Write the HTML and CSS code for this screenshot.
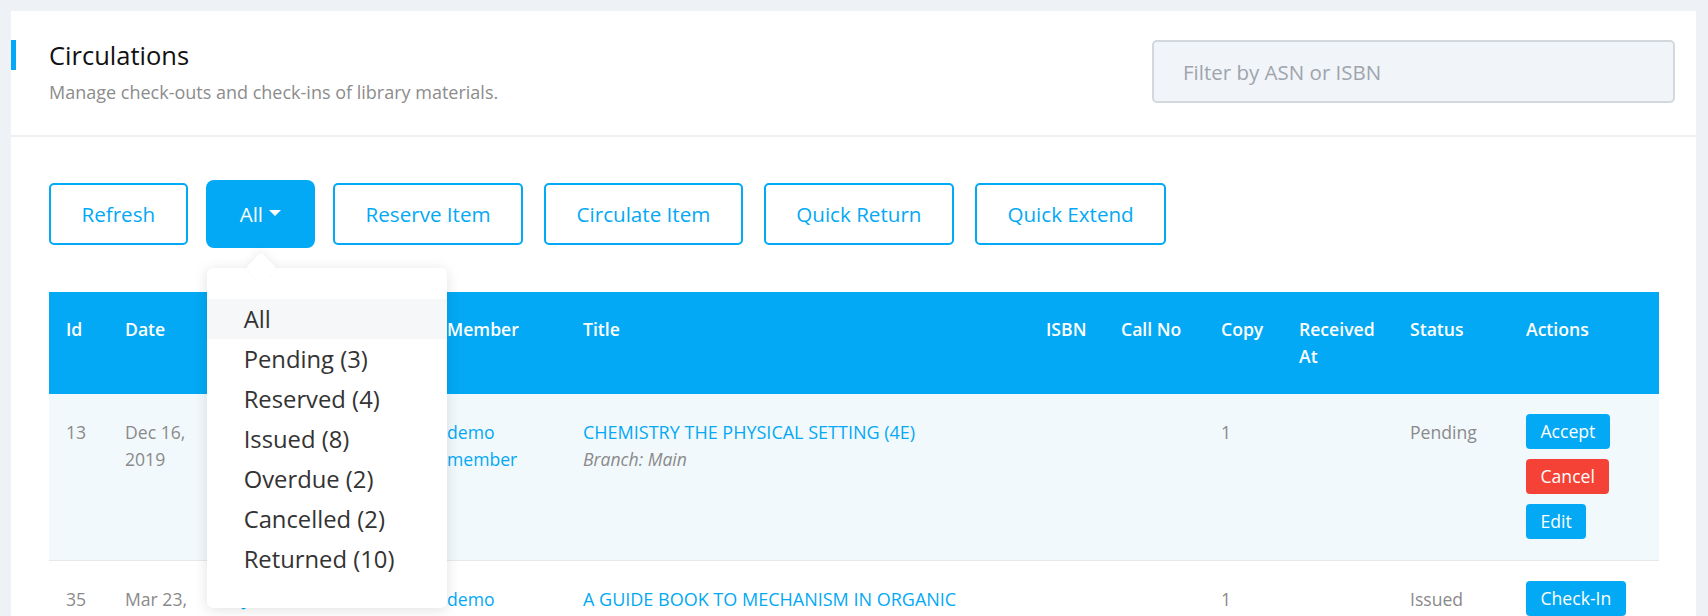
FILE: index.html
```html
<!DOCTYPE html>
<html lang="en">
<head>
<meta charset="utf-8">
<title>Circulations</title>
<link rel="stylesheet" href="styles.css">
</head>
<body>
<div class="card">
  <header class="card-header">
    <div class="heading">
      <h1 class="title">Circulations</h1>
      <p class="subtitle">Manage check-outs and check-ins of library materials.</p>
    </div>
    <input class="search" type="text" placeholder="Filter by ASN or ISBN">
  </header>
  <div class="card-body">
    <div class="toolbar">
      <button class="btn btn-outline">Refresh</button>
      <div class="dropdown">
        <button class="btn btn-filled">All<span class="caret"></span></button>
        <ul class="menu">
          <li class="menu-item active">All</li>
          <li class="menu-item">Pending (3)</li>
          <li class="menu-item">Reserved (4)</li>
          <li class="menu-item">Issued (8)</li>
          <li class="menu-item">Overdue (2)</li>
          <li class="menu-item">Cancelled (2)</li>
          <li class="menu-item">Returned (10)</li>
        </ul>
      </div>
      <button class="btn btn-outline">Reserve Item</button>
      <button class="btn btn-outline">Circulate Item</button>
      <button class="btn btn-outline">Quick Return</button>
      <button class="btn btn-outline">Quick Extend</button>
    </div>
    <table class="grid">
      <colgroup>
        <col class="c-id"><col class="c-date"><col class="c-lib"><col class="c-member"><col class="c-title">
        <col class="c-isbn"><col class="c-call"><col class="c-copy"><col class="c-recv"><col class="c-status"><col class="c-actions">
      </colgroup>
      <thead>
        <tr>
          <th>Id</th><th>Date</th><th>Librarian</th><th>Member</th><th>Title</th>
          <th>ISBN</th><th>Call No</th><th>Copy</th><th>Received At</th><th>Status</th><th>Actions</th>
        </tr>
      </thead>
      <tbody>
        <tr class="row-pending">
          <td>13</td>
          <td>Dec 16, 2019</td>
          <td><a class="link">Jane Doe</a></td>
          <td><a class="link">demo member</a></td>
          <td><a class="link title-link">CHEMISTRY THE PHYSICAL SETTING (4E)</a><div class="branch">Branch: Main</div></td>
          <td></td>
          <td></td>
          <td>1</td>
          <td></td>
          <td>Pending</td>
          <td class="actions">
            <button class="act act-blue">Accept</button>
            <button class="act act-red">Cancel</button>
            <button class="act act-blue">Edit</button>
          </td>
        </tr>
        <tr>
          <td>35</td>
          <td>Mar 23, 2020</td>
          <td><a class="link">Jane Doe</a></td>
          <td><a class="link">demo member</a></td>
          <td><a class="link title-link">A GUIDE BOOK TO MECHANISM IN ORGANIC CHEMISTRY</a><div class="branch">Branch: Main</div></td>
          <td></td>
          <td></td>
          <td>1</td>
          <td></td>
          <td>Issued</td>
          <td class="actions">
            <button class="act act-blue">Check-In</button>
          </td>
        </tr>
      </tbody>
    </table>
  </div>
</div>
</body>
</html>
```
FILE: styles.css
```css
* { box-sizing: border-box; }

html, body {
  margin: 0;
  height: 100%;
}

body {
  background: #eef1f5;
  font-family: "Open Sans", "Liberation Sans", sans-serif;
  color: #8a8a8a;
  padding: 11px 12px 0 11px;
  overflow: hidden;
}

.card {
  background: #ffffff;
  min-height: 100%;
}

.card-header {
  display: flex;
  justify-content: space-between;
  align-items: flex-start;
  padding: 29px 21px 0 0;
  height: 126px;
  border-bottom: 2px solid #edf0f3;
}

.title {
  margin: 0;
  border-left: 5px solid #03a9f4;
  padding-left: 33px;
  font-size: 25.5px;
  font-weight: 400;
  line-height: 30px;
  color: #111;
}

.subtitle {
  margin: 10px 0 0 38px;
  font-size: 18px;
  line-height: 24px;
  color: #8c8c8c;
}

.search {
  width: 523px;
  height: 63px;
  border: 2px solid #d3d8de;
  border-radius: 5px;
  background: #f1f4f8;
  padding: 0 0 0 29px;
  font-family: inherit;
  font-size: 20.5px;
  color: #555;
  outline: none;
}

.search::placeholder { color: #9ea5ad; }

.card-body {
  padding: 46px 37px 0 38px;
}

.toolbar {
  display: flex;
  gap: 21px;
  align-items: flex-start;
}

.btn {
  font-family: inherit;
  font-size: 20.6px;
  line-height: 28px;
  height: 62px;
  padding: 0 30.5px;
  border-radius: 5px;
  cursor: pointer;
  display: inline-flex;
  align-items: center;
}

.btn-outline {
  background: #fff;
  border: 2px solid #03a9f4;
  color: #03a9f4;
}

.btn-filled {
  background: #03a9f4;
  border: 2px solid #03a9f4;
  color: #fff;
  padding: 0 29px;
  box-shadow: 0 0 0 3px #03a9f4;
}

.caret {
  display: inline-block;
  margin-left: 6px;
  border-left: 6px solid transparent;
  border-right: 6px solid transparent;
  border-top: 6px solid #fff;
  position: relative;
  top: -1px;
}

.dropdown {
  position: relative;
}

.menu {
  position: absolute;
  left: -2px;
  top: 85px;
  width: 240px;
  margin: 0;
  padding: 31px 0 29px;
  list-style: none;
  background: #fff;
  border-radius: 6px;
  box-shadow: 0 2px 14px rgba(0, 0, 0, 0.12);
  z-index: 10;
}

.menu::before {
  content: "";
  position: absolute;
  left: 43px;
  top: -11px;
  width: 22px;
  height: 22px;
  background: #fff;
  transform: rotate(45deg);
  border-radius: 4px;
  box-shadow: -3px -3px 8px rgba(0, 0, 0, 0.05);
}

.menu-item {
  position: relative;
  height: 40px;
  line-height: 40px;
  padding-left: 37px;
  font-size: 23.8px;
  color: #333;
}

.menu-item.active {
  background: #f6f7f9;
}

.grid {
  margin-top: 47px;
  width: 1610px;
  border-collapse: collapse;
  table-layout: fixed;
  font-size: 17.6px;
  line-height: 27px;
}

.c-id { width: 59px; }
.c-date { width: 118px; }
.c-lib { width: 204px; }
.c-member { width: 136px; }
.c-title { width: 463px; }
.c-isbn { width: 75px; }
.c-call { width: 100px; }
.c-copy { width: 78px; }
.c-recv { width: 111px; }
.c-status { width: 116px; }
.c-actions { width: 150px; }

.grid th {
  background: #03a9f4;
  color: #fff;
  font-weight: 600;
  text-align: left;
  vertical-align: top;
  padding: 24px 17px 24px 17px;
}

.grid td {
  vertical-align: top;
  padding: 25px 17px 24px 17px;
  border-bottom: 1px solid #e6e9ec;
}

.row-pending td {
  background: #f2f9fd;
}

.link {
  color: #03a9f4;
  text-decoration: none;
}

.title-link {
  font-size: 18px;
}

.branch {
  font-style: italic;
  color: #8a8a8a;
}

.grid td.actions {
  padding: 20px 17px 21px 17px;
}

.act {
  display: block;
  height: 35px;
  padding: 0 14.5px;
  margin-bottom: 10px;
  border: none;
  border-radius: 4px;
  color: #fff;
  font-family: inherit;
  font-size: 17.6px;
  line-height: 35px;
  cursor: pointer;
}

.act:last-child { margin-bottom: 0; }

.act-blue { background: #03a9f4; }
.act-red { background: #f44336; }
```
